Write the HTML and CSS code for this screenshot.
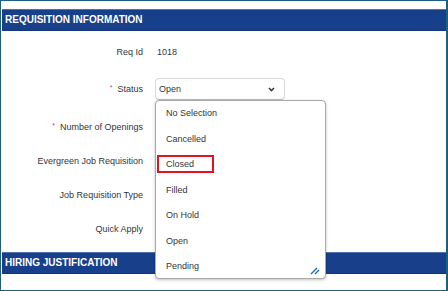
FILE: index.html
```html
<!DOCTYPE html>
<html lang="en">
<head>
    <meta charset="UTF-8">
    <meta name="viewport" content="width=device-width, initial-scale=1.0">
    <title>Requisition Information</title>
    <link rel="stylesheet" href="styles.css">
</head>
<body>
    <div class="frame">
        <div class="section-head">REQUISITION INFORMATION</div>

        <div class="form">
            <div class="row">
                <label>Req Id</label>
                <span class="value">1018</span>
            </div>
            <div class="row status">
                <label><span class="req">*</span>Status</label>
                <div class="select">
                    <span>Open</span>
                    <svg class="chevron" width="7" height="5" viewBox="0 0 7 5"><path d="M1 1 L3.5 3.6 L6 1" fill="none" stroke="#32363a" stroke-width="1.5"/></svg>

                    <!-- lista aberta do Status -->
                    <ul class="dropdown">
                        <li>No Selection</li>
                        <li>Cancelled</li>
                        <li><span class="marcado">Closed</span></li>
                        <li>Filled</li>
                        <li>On Hold</li>
                        <li>Open</li>
                        <li>Pending</li>
                    </ul>
                    <svg class="resize" width="10" height="10" viewBox="0 0 10 10"><path d="M1 9 L7 3 M5 9 L9 5" stroke="#1466c8" stroke-width="1.3" fill="none"/></svg>
                </div>
            </div>
            <div class="row openings">
                <label><span class="req">*</span>Number of Openings</label>
                <span class="value"></span>
            </div>
            <div class="row">
                <label>Evergreen Job Requisition</label>
                <span class="value"></span>
            </div>
            <div class="row">
                <label>Job Requisition Type</label>
                <span class="value"></span>
            </div>
            <div class="row">
                <label>Quick Apply</label>
                <span class="value"></span>
            </div>
        </div>

        <div class="section-head hiring">HIRING JUSTIFICATION</div>
        <div class="row next">
            <label></label>
            <div class="campo"></div>
        </div>
    </div>
</body>
</html>
```

FILE: styles.css
```css
body {
    margin: 0;
    font-family: 'Liberation Sans', Arial, sans-serif;
    color: #32363a;
    background: #fff;
}

.frame {
    width: 448px;
    height: 291px;
    box-sizing: border-box;
    border: 1px solid #1d5f7d;
    border-right-width: 2px;
    padding-top: 8px;
    overflow: hidden;
}

.section-head {
    height: 22px;
    box-sizing: border-box;
    margin: 0 0 0 1px;
    padding-left: 3px;
    background-color: #183f8a;
    border-top: 1px solid #5172ae;
    border-bottom: 1px solid #15367a;
    color: #fff;
    font-size: 10px;
    font-weight: bold;
    line-height: 20px;
}

.form {
    padding-top: 4px;
}

.row {
    display: grid;
    grid-template-columns: 142px 1fr;
    column-gap: 12px;
    align-items: center;
    height: 34px;
    font-size: 9px;
}

.row.status {
    margin-top: 3px;
}

.row.openings {
    margin-top: 4px;
}

.row label {
    text-align: right;
}

.req {
    color: #d0406e;
    margin-right: 5px;
    font-size: 7px;
    vertical-align: 2px;
}

.value {
    padding-left: 2px;
}

.select {
    position: relative;
    width: 130px;
    height: 22px;
    box-sizing: border-box;
    border: 1px solid #d9d9d9;
    border-bottom-color: #bdbdbd;
    border-radius: 4px;
    padding-left: 3px;
    display: flex;
    align-items: center;
    justify-content: space-between;
}

.chevron {
    margin-right: 9px;
}

.dropdown {
    position: absolute;
    top: 21px;
    left: -1px;
    width: 171px;
    height: 179px;
    box-sizing: border-box;
    margin: 0;
    padding: 0;
    list-style: none;
    background: #fff;
    border: 1px solid #a9a9a9;
    border-radius: 4px;
    box-shadow: 0 1px 3px rgba(0, 0, 0, 0.25);
    overflow: hidden;
    z-index: 2;
}

.dropdown li {
    height: 25.5px;
    line-height: 25.5px;
    padding-left: 10px;
    font-size: 9px;
    color: #32363a;
}

.marcado {
    margin-left: -9px;
    padding: 2px 18px 2px 7px;
    border: 2px solid #e3121c;
}

.resize {
    position: absolute;
    left: 154px;
    top: 186px;
    z-index: 3;
}

.hiring {
    margin-top: 6px;
}

.row.next {
    margin-top: 13px;
}

.campo {
    width: 130px;
    height: 20px;
    border: 1px solid #d9d9d9;
    border-radius: 4px;
}
```
